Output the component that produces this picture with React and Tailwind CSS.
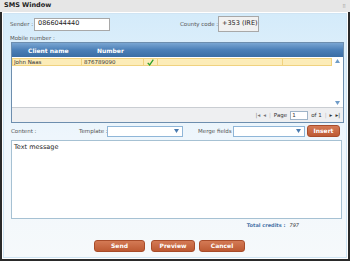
import React from "react";

const font = { fontFamily: '"DejaVu Sans", Verdana, sans-serif' };

const SelectBox = ({ className }) => (
  <div className={`shrink-0 h-[11px] bg-white border border-[#8fb6d8] flex items-center justify-end pr-[3px] ${className}`}>
    <svg width="5" height="4" viewBox="0 0 5 4">
      <path d="M0 0 L5 0 L2.5 4 Z" fill="#4a7bb0" />
    </svg>
  </div>
);

const OrangeBtn = ({ children, className }) => (
  <button className={`shrink-0 h-[12px] rounded-[3px] bg-gradient-to-b from-[#d47a55] to-[#bd5a33] border border-[#a84c2a] text-white font-bold text-[6px] leading-none ${className}`}>
    {children}
  </button>
);

export default function App() {
  return (
    <div className="w-[350px] h-[261px] flex flex-col bg-white text-[#333] whitespace-nowrap overflow-hidden" style={font}>
      {/* title bar */}
      <div className="h-[12px] shrink-0 bg-[#e6e6e6] flex items-center justify-between px-[4px]">
        <span className="text-[6.5px] font-bold text-[#222]">SMS Window</span>
        <span className="text-[5px] text-[#999] leading-none">⠿</span>
      </div>

      <div className="flex-1 min-h-0 border-x-2 border-b-2 border-[#2a2a2a] p-[1px]">
        <div className="h-full border border-[#cfe4f3] bg-gradient-to-b from-[#d4ebfa] via-[#eef6fc] to-[#f6f9fb] px-[6px] flex flex-col">
          {/* sender row */}
          <div className="flex items-center mt-[3px] h-[14px] shrink-0">
            <span className="shrink-0 text-[5.5px] text-[#555] w-[24px]">Sender :</span>
            <div className="shrink-0 w-[76px] h-[13px] bg-white border border-[#a8a8a8] flex items-center pl-[3px] text-[6.5px] text-[#222]">
              0866044440
            </div>
            <span className="shrink-0 text-[5.5px] text-[#555] ml-[70px] w-[38px]">County code :</span>
            <div className="shrink-0 w-[41px] h-[16px] bg-[#f1f1f1] border border-[#a8a8a8] flex items-center pl-[3px] text-[6.5px] text-[#222]">
              +353 (IRE)
            </div>
          </div>

          <div className="shrink-0 text-[5.5px] text-[#555] mt-[3px] h-[8px] leading-[8px]">Mobile number :</div>

          {/* grid */}
          <div className="shrink-0 ml-[1px] w-[333px] border border-[#6d8eae] bg-white flex flex-col">
            <div className="h-[14px] bg-gradient-to-b from-[#7aa6d2] via-[#4b7fb7] to-[#3a6da4] flex items-center text-white font-bold text-[6px]">
              <div className="w-[69px] pl-[16px]">Client name</div>
              <div className="w-[62px] pl-[16px]">Number</div>
            </div>
            <div className="flex h-[50px]">
              <div className="flex-1 pt-[1px]">
                <div className="h-[8px] flex bg-[#fcecb8] border border-[#f0d27f] text-[5.5px] text-[#333] leading-[6px]">
                  <div className="w-[69px] pl-[1px] border-r border-[#f0d27f]">John Naas</div>
                  <div className="w-[62px] pl-[2px] border-r border-[#f0d27f]">876789090</div>
                  <div className="w-[14px] border-r border-[#f0d27f] flex justify-center">
                    <svg width="7" height="7" viewBox="0 0 10 10">
                      <path d="M1 5.5 L3.8 8.5 L9 1" stroke="#2aa02a" strokeWidth="1.8" fill="none" />
                    </svg>
                  </div>
                  <div className="w-[125px] border-r border-[#f0d27f]" />
                  <div className="flex-1" />
                </div>
              </div>
              <div className="w-[11px] flex flex-col justify-between items-center py-[2px]">
                <svg width="5" height="4" viewBox="0 0 5 4"><path d="M0 4 L5 4 L2.5 0 Z" fill="#6f9cc8" /></svg>
                <svg width="5" height="4" viewBox="0 0 5 4"><path d="M0 0 L5 0 L2.5 4 Z" fill="#6f9cc8" /></svg>
              </div>
            </div>
            <div className="h-[15px] bg-[#eeeff1] border-t border-[#c9cdd2] flex items-center justify-end pr-[3px] text-[5.5px] text-[#333] gap-[3px]">
              <span className="text-[#777]">|◂</span>
              <span className="text-[#777]">◂</span>
              <span className="text-[#bbb]">|</span>
              <span>Page</span>
              <div className="w-[18px] h-[9px] bg-white border border-[#9fb4c8] text-[5.5px] leading-[7px] pl-[1px]">1</div>
              <span>of 1</span>
              <span className="text-[#bbb]">|</span>
              <span className="text-[#333]">▸</span>
              <span className="text-[#333]">▸|</span>
            </div>
          </div>

          {/* content row */}
          <div className="shrink-0 flex items-center mt-[2px] h-[12px] text-[5.5px] text-[#555]">
            <span className="shrink-0 w-[69px] pl-[1px]">Content :</span>
            <span className="shrink-0 w-[28px]">Template :</span>
            <SelectBox className="w-[76px]" />
            <span className="shrink-0 ml-[15px] w-[35px]">Merge fields :</span>
            <SelectBox className="w-[72px]" />
            <OrangeBtn className="w-[33px] ml-[2px]">Insert</OrangeBtn>
          </div>

          {/* textarea */}
          <div className="shrink-0 mt-[3px] ml-[1px] w-[331px] h-[79px] bg-white border border-[#a6c1d3] p-[2px] text-[6.5px] text-[#222] leading-[8px]">
            Text message
          </div>

          <div className="shrink-0 mt-[2px] h-[9px] flex items-center justify-end pr-[41px] text-[5px]">
            <span className="text-[#4b74a8] font-bold mr-[4px]">Total credits :</span>
            <span className="text-[#333] italic">797</span>
          </div>

          <div className="shrink-0 mt-[10px] flex ml-[84px]">
            <OrangeBtn className="w-[51px]">Send</OrangeBtn>
            <OrangeBtn className="w-[44px] ml-[6px]">Preview</OrangeBtn>
            <OrangeBtn className="w-[46px] ml-[4px]">Cancel</OrangeBtn>
          </div>
        </div>
      </div>
    </div>
  );
}
